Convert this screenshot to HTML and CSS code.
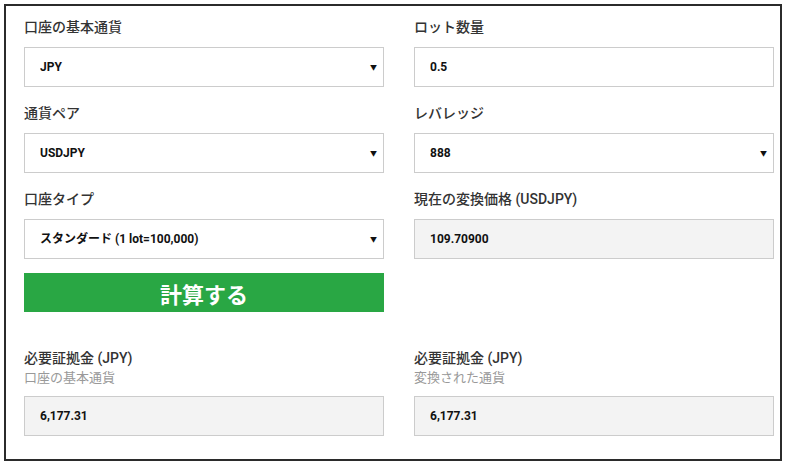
FILE: index.html
```html
<!DOCTYPE html>
<html lang="ja">

<head>
    <meta charset="UTF-8">
    <meta name="viewport" content="width=device-width, initial-scale=1.0">
    <title>証拠金計算機</title>
    <link rel="stylesheet" href="styles.css">
</head>

<body>
    <main class="calculator">
        <div class="row">
            <label class="field">
                <span class="label">口座の基本通貨</span>
                <span class="select-wrap">
                    <select class="control">
                        <option>JPY</option>
                    </select>
                </span>
            </label>
            <label class="field">
                <span class="label">ロット数量</span>
                <input class="control" type="text" value="0.5">
            </label>
        </div>

        <div class="row">
            <label class="field">
                <span class="label">通貨ペア</span>
                <span class="select-wrap">
                    <select class="control">
                        <option>USDJPY</option>
                    </select>
                </span>
            </label>
            <label class="field">
                <span class="label">レバレッジ</span>
                <span class="select-wrap">
                    <select class="control">
                        <option>888</option>
                    </select>
                </span>
            </label>
        </div>

        <div class="row">
            <label class="field">
                <span class="label">口座タイプ</span>
                <span class="select-wrap">
                    <select class="control">
                        <option>スタンダード (1 lot=100,000)</option>
                    </select>
                </span>
            </label>
            <label class="field">
                <span class="label">現在の変換価格 (USDJPY)</span>
                <input class="control readonly" type="text" value="109.70900" readonly>
            </label>
        </div>

        <div class="row">
            <button class="calc-button">計算する</button>
        </div>

        <div class="row results">
            <div class="field">
                <span class="label">必要証拠金 (JPY)</span>
                <span class="sub-label">口座の基本通貨</span>
                <input class="control readonly" type="text" value="6,177.31" readonly>
            </div>
            <div class="field">
                <span class="label">必要証拠金 (JPY)</span>
                <span class="sub-label">変換された通貨</span>
                <input class="control readonly" type="text" value="6,177.31" readonly>
            </div>
        </div>
    </main>
</body>

</html>
```

FILE: styles.css
```css
*,
*::after,
*::before {
    box-sizing: border-box;
}

body {
    font-family: Roboto, "Noto Sans CJK JP", sans-serif;
    background: #fff;
    color: #333;
    margin: 0;
    padding: 4px;
}

.calculator {
    width: 778px;
    height: 457px;
    border: 2px solid #2b2b2b;
    padding: 11px 6px 0 18px;
    display: flex;
    flex-direction: column;
    gap: 16px;
}

.row {
    display: grid;
    grid-template-columns: 360px 360px;
    column-gap: 30px;
}

.field {
    display: flex;
    flex-direction: column;

    .label {
        font-size: 14px;
        font-weight: 500;
        line-height: 20px;
        height: 20px;
        margin-bottom: 10px;
        color: #333;
    }
}

.control {
    appearance: none;
    width: 100%;
    height: 40px;
    border: 1px solid #ccc;
    border-radius: 0;
    background: #fff;
    color: #111;
    font-family: inherit;
    font-size: 12px;
    font-weight: 700;
    padding: 0 15px;
    outline: none;

    &.readonly {
        background: #f3f3f3;
    }
}

.select-wrap {
    position: relative;
    display: block;

    &::after {
        content: "\25BC";
        position: absolute;
        right: 7px;
        top: 50%;
        transform: translateY(-50%);
        font-size: 7px;
        color: #111;
        pointer-events: none;
    }
}

.calc-button {
    height: 39px;
    margin-top: -2px;
    border: 0;
    background: #29a744;
    color: #fff;
    font-family: inherit;
    font-size: 22px;
    font-weight: 700;
    cursor: pointer;
    padding: 0;
}

.results {
    margin-top: 21px;

    .label {
        margin-bottom: 0;
        height: 19px;
        line-height: 19px;
    }

    .sub-label {
        font-size: 13px;
        line-height: 19px;
        color: #999;
        margin-bottom: 9px;
    }
}
```
